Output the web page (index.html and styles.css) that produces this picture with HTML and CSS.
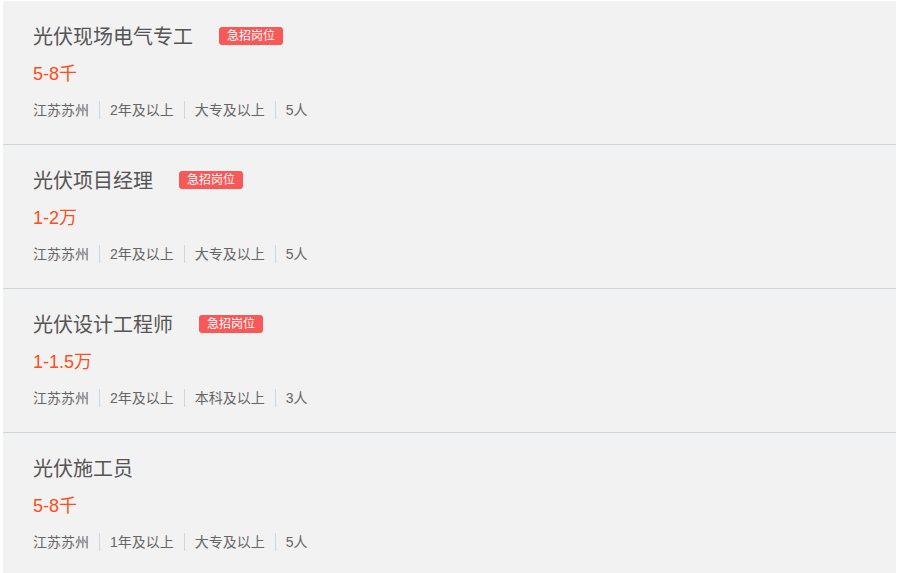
FILE: index.html
```html
<!DOCTYPE html>
<html lang="zh-CN">

<head>
  <meta charset="UTF-8">
  <title>招聘岗位</title>
  <link rel="stylesheet" href="styles.css">
</head>

<body>

  <div class="job-list">
    <div class="job">
      <div class="job-head">
        <span class="job-title">光伏现场电气专工</span>
        <span class="badge">急招岗位</span>
      </div>
      <div class="salary">5-8千</div>
      <div class="meta">
        <span>江苏苏州</span>
        <span>2年及以上</span>
        <span>大专及以上</span>
        <span>5人</span>
      </div>
    </div>

    <div class="job">
      <div class="job-head">
        <span class="job-title">光伏项目经理</span>
        <span class="badge">急招岗位</span>
      </div>
      <div class="salary">1-2万</div>
      <div class="meta">
        <span>江苏苏州</span>
        <span>2年及以上</span>
        <span>大专及以上</span>
        <span>5人</span>
      </div>
    </div>

    <div class="job">
      <div class="job-head">
        <span class="job-title">光伏设计工程师</span>
        <span class="badge">急招岗位</span>
      </div>
      <div class="salary">1-1.5万</div>
      <div class="meta">
        <span>江苏苏州</span>
        <span>2年及以上</span>
        <span>本科及以上</span>
        <span>3人</span>
      </div>
    </div>

    <div class="job">
      <div class="job-head">
        <span class="job-title">光伏施工员</span>
      </div>
      <div class="salary">5-8千</div>
      <div class="meta">
        <span>江苏苏州</span>
        <span>1年及以上</span>
        <span>大专及以上</span>
        <span>5人</span>
      </div>
    </div>
  </div>

</body>

</html>
```

FILE: styles.css
```css
body {
  margin: 0;
  padding: 1px 1px 0 3px;
  background: white;
  font-family: "Liberation Sans", "Noto Sans CJK SC", sans-serif;
}

.job-list {
  background: #f2f2f2;
}

.job {
  padding: 19px 30px 24px;
  border-bottom: 1px solid #c8d6e3;
}

.job-head {
  display: flex;
  align-items: center;
  height: 30px;
}

.job-title {
  font-size: 20px;
  color: #555;
}

.badge {
  margin-left: 26px;
  margin-top: 2px;
  padding: 0 8px;
  height: 18px;
  line-height: 18px;
  font-size: 12px;
  color: white;
  background: #f75959;
  border-radius: 3px;
}

.salary {
  margin-top: 9px;
  line-height: 30px;
  font-size: 18px;
  color: #fd4e1c;
}

.meta {
  display: flex;
  align-items: center;
  margin-top: 11px;
  height: 20px;
  font-size: 14px;
  color: #666;
}

.meta span {
  padding: 0 10px;
  line-height: 18px;
  border-left: 1px solid #cfd6dd;
}

.meta span:first-child {
  padding-left: 0;
  border-left: none;
}
```
